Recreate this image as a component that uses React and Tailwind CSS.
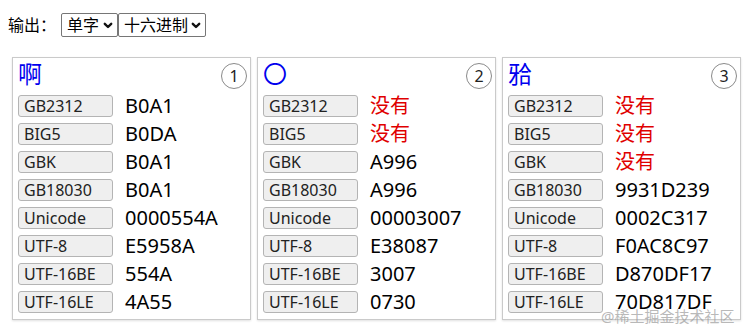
const CARDS = [
  {
    no: 1,
    ch: "啊",
    rows: [
      ["GB2312", "B0A1"],
      ["BIG5", "B0DA"],
      ["GBK", "B0A1"],
      ["GB18030", "B0A1"],
      ["Unicode", "0000554A"],
      ["UTF-8", "E5958A"],
      ["UTF-16BE", "554A"],
      ["UTF-16LE", "4A55"],
    ],
  },
  {
    no: 2,
    ch: "〇",
    rows: [
      ["GB2312", null],
      ["BIG5", null],
      ["GBK", "A996"],
      ["GB18030", "A996"],
      ["Unicode", "00003007"],
      ["UTF-8", "E38087"],
      ["UTF-16BE", "3007"],
      ["UTF-16LE", "0730"],
    ],
  },
  {
    no: 3,
    ch: "𬌗",
    rows: [
      ["GB2312", null],
      ["BIG5", null],
      ["GBK", null],
      ["GB18030", "9931D239"],
      ["Unicode", "0002C317"],
      ["UTF-8", "F0AC8C97"],
      ["UTF-16BE", "D870DF17"],
      ["UTF-16LE", "70D817DF"],
    ],
  },
];

function Chevron() {
  return (
    <svg className="h-[9px] w-[10px]" viewBox="0 0 10 9" fill="none" stroke="#111" strokeWidth={2.4} strokeLinecap="round" strokeLinejoin="round">
      <path d="M1.8 2.8l3.2 3.2l3.2-3.2" />
    </svg>
  );
}

function FakeSelect({ label, w }) {
  return (
    <div className={`flex h-[24px] items-center justify-between rounded-[2px] border border-[#767676] bg-white pl-[5px] pr-[4px] text-[16px] leading-[20px] text-black ${w}`}>
      <span>{label}</span>
      <Chevron />
    </div>
  );
}

function Card({ no, ch, rows }) {
  return (
    <div className="flex w-[239px] flex-col gap-[6px] border border-[#cacaca] bg-white pb-[6px] pl-[5px] pr-[3px] shadow-[0_1px_2px_rgba(0,0,0,0.12)]">
      <div className="flex h-[31px] items-end justify-between">
        <span className="self-center text-[24px] leading-[30px] text-[#0000ee]">{ch}</span>
        <span className="flex h-[26px] w-[26px] items-center justify-center rounded-full border border-[#8a8a8a] text-[16px] leading-none text-[#222]">
          {no}
        </span>
      </div>
      {rows.map(([name, val]) => (
        <div key={name} className="flex h-[22px] items-center">
          <span className="flex h-[22px] w-[95px] items-center rounded-[3px] border border-[#b4b4b4] bg-[#efefef] pl-[5px] text-[16px] leading-[20px] text-[#222]">
            {name}
          </span>
          <span
            className={
              val
                ? "ml-[12px] text-[20px] leading-[22px] text-black"
                : "ml-[12px] text-[20px] leading-[22px] text-[#e00000]"
            }
          >
            {val || "没有"}
          </span>
        </div>
      ))}
    </div>
  );
}

export default function App() {
  return (
    <div className="relative h-[335px] w-[754px] overflow-hidden bg-white font-['Noto_Sans','Noto_Sans_CJK_SC',sans-serif] text-black">
      <div className="flex h-[50px] items-center pl-[8px]">
        <span className="mr-[5px] text-[16px]">输出：</span>
        <FakeSelect label="单字" w="w-[57px]" />
        <FakeSelect label="十六进制" w="w-[88px]" />
      </div>
      <div className="mt-[7px] flex gap-[6px] pl-[12px]">
        {CARDS.map((c) => (
          <Card key={c.no} {...c} />
        ))}
      </div>
      <span className="absolute left-[601px] top-[305px] text-[15px] text-[#9a9a9a]/70">@稀土掘金技术社区</span>
    </div>
  );
}
